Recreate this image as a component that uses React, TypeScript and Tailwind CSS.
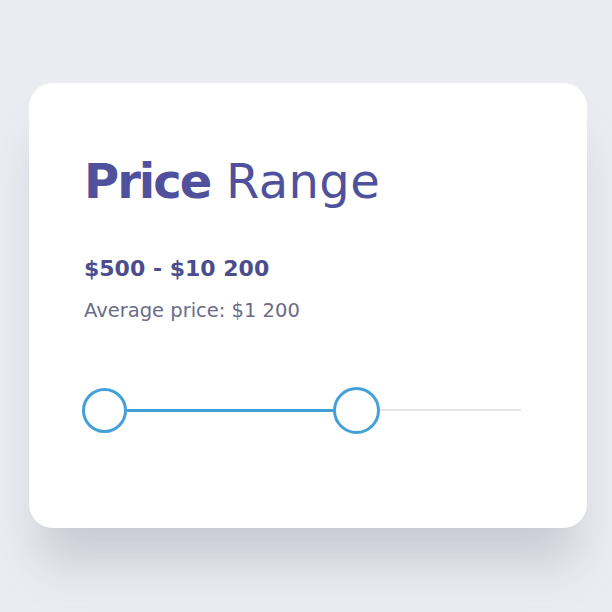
export default function App() {
  return (
    <div
      className="w-[612px] h-[612px] bg-[#ebecf1] pt-[83px] pl-[29px]"
      style={{ fontFamily: '"DejaVu Sans", sans-serif' }}
    >
      <div className="w-[558px] h-[445px] bg-white rounded-[24px] shadow-[0_45px_45px_-12px_rgba(150,152,170,0.4)] pl-[55px] pt-[74px]">
        <h1 className="text-[48px] leading-[48px] text-[#4f519c]">
          <span className="font-bold tracking-[-2px]">Price</span>
          <span className="font-normal tracking-[0.4px]"> Range</span>
        </h1>
        <div className="mt-[53px] text-[22px] leading-[22px] font-bold text-[#4b4d8c]">
          $500 - $10 200
        </div>
        <div className="mt-[21px] text-[19.5px] leading-[20px] text-[#6c6c88]">
          Average price: $1 200
        </div>
        <div className="mt-[66px] flex items-center w-[439px] h-[46px] -ml-[2px]">
          <div className="w-[45px] h-[45px] rounded-full border-[3px] border-[#43a0d8] bg-white shrink-0" />
          <div className="flex-1 h-[3px] bg-[#439ed6]" />
          <div className="w-[47px] h-[47px] rounded-full border-[3px] border-[#43a0d8] bg-white shrink-0 ml-[-1px]" />
          <div className="w-[141px] h-[2px] bg-[#e6e6ea]" />
        </div>
      </div>
    </div>
  );
}
